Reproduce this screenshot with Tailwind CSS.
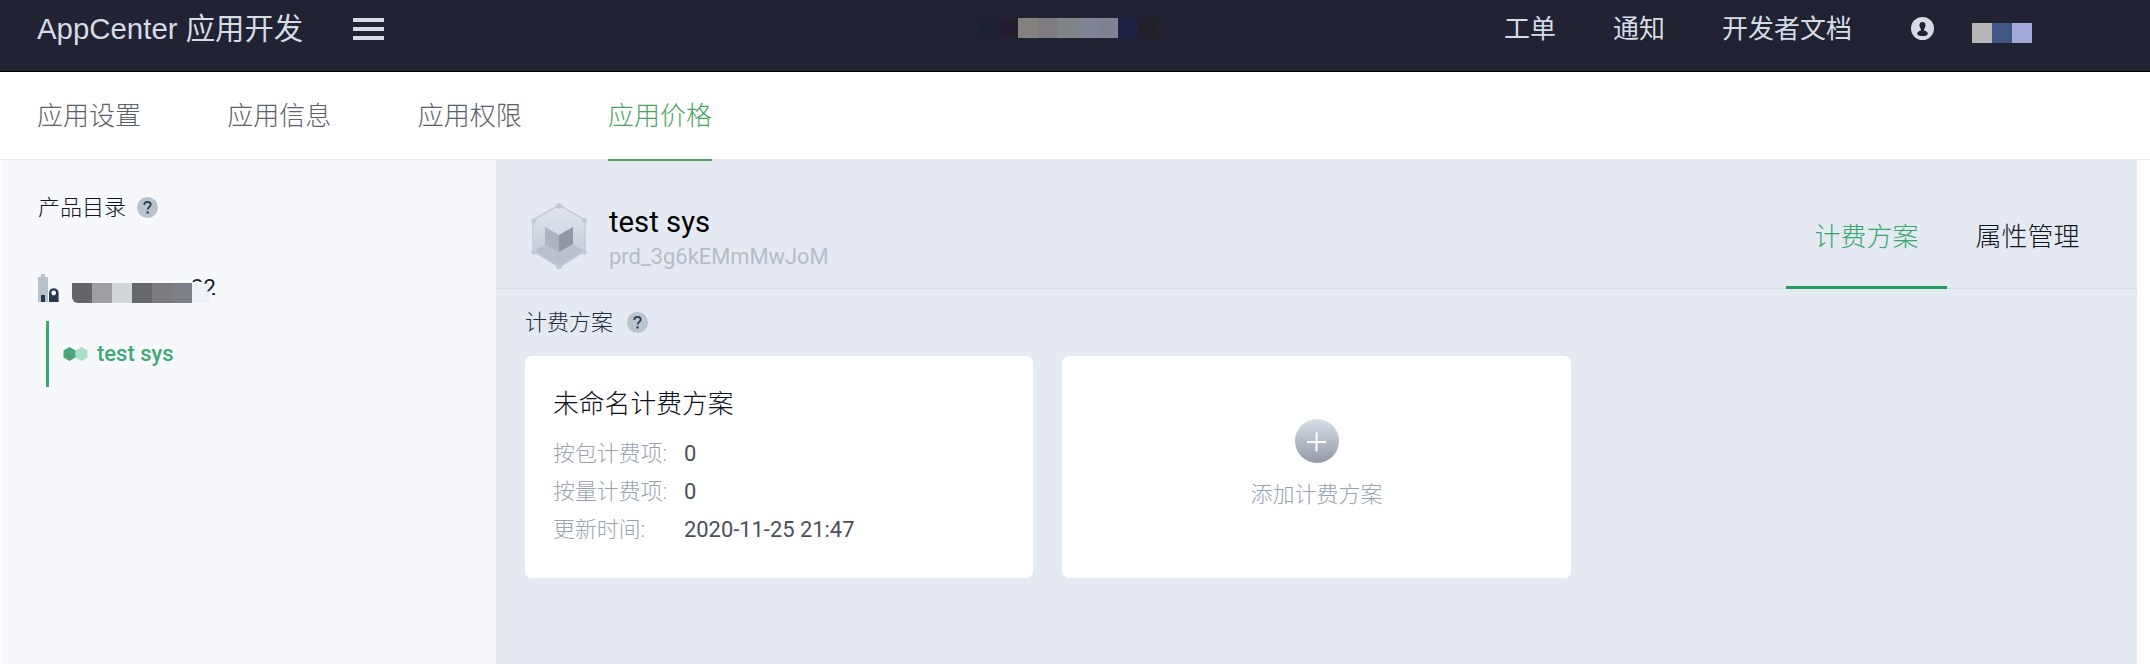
<!DOCTYPE html>
<html lang="zh-CN"><head><meta charset="utf-8"><title>AppCenter</title>
<script src="https://cdn.jsdelivr.net/npm/@tailwindcss/browser@4"></script></head>
<body class="w-[2150px] h-[664px] overflow-hidden bg-white font-['Roboto','Noto_Sans_CJK_SC',sans-serif] flex flex-col whitespace-nowrap">
<header class="h-[72px] shrink-0 bg-[#212332] border-b border-black flex items-start pl-[37px] text-[#d5dce6]">
  <div class="w-[316px] pt-[9px] text-[29.4px] leading-10 font-['Liberation_Sans','Noto_Sans_CJK_SC',sans-serif]">AppCenter 应用开发</div>
  <div class="w-[31px] mt-[18px] flex flex-col gap-[5px]"><i class="h-[4px] bg-current"></i><i class="h-[4px] bg-current"></i><i class="h-[4px] bg-current"></i></div>
  <div class="ml-[594px] mt-[18px] flex h-5"><i class="w-5 bg-[#1c2233] rounded-l-lg"></i><i class="w-5 bg-[#231d2d]"></i><i class="w-5 bg-[#85817f]"></i><i class="w-5 bg-[#817b82]"></i><i class="w-5 bg-[#808487]"></i><i class="w-5 bg-[#7d8594]"></i><i class="w-5 bg-[#7f8190]"></i><i class="w-5 bg-[#1f2243]"></i><i class="w-5 bg-[#242028]"></i></div>
  <nav class="ml-[346px] pt-[9px] flex gap-[57px] text-[26px] leading-10"><a>工单</a><a>通知</a><a>开发者文档</a></nav>
  <svg class="ml-[59px] mt-[17px] w-[23px] h-[23px]" viewBox="0 0 23 23"><circle cx="11.500" cy="11.500" r="11.500" fill="#d5dce6"/><path d="M11.500 5c2.300 0 3 1.500 3 3.300 0 1.700-.7 2.700-1.300 3.700v1.700c2 .4 3.600 1.100 3.600 3 0 1.500-2 2.300-5.300 2.300s-5.300-.8-5.300-2.300c0-1.900 1.600-2.600 3.600-3V12c-.6-1-1.300-2-1.300-3.700C8.500 6.500 9.200 5 11.500 5z" fill="#212332"/></svg>
  <div class="ml-[38px] mt-[23px] flex h-5"><i class="w-5 bg-[#b9b6b9]"></i><i class="w-5 bg-[#405684]"></i><i class="w-5 bg-[#a4a9d9]"></i></div>
</header>
<nav class="h-[88px] shrink-0 border-b border-[#e8eaec] pl-[37px] flex gap-[86.300px] text-[26px] font-light text-[#5b616b] leading-[88px]">
  <a class="h-[89px]">应用设置</a><a class="h-[89px]">应用信息</a><a class="h-[89px]">应用权限</a><a class="h-[89px] border-b-2 border-[#4aa564] text-[#4aa564] relative">应用价格</a>
</nav>
<div class="flex-1 flex pl-[2px] pr-[13px]">
  <aside class="w-[494px] bg-[#f6f8fc] pl-9">
    <div class="mt-[31px] h-8 flex items-center gap-[11px] text-[22px] font-light text-[#111722]">产品目录
      <svg class="w-[21px] h-[21px]" viewBox="0 0 21 21"><circle cx="10.500" cy="10.500" r="10.500" fill="#b8c3ce"/><path d="M7.200 7.900C7.300 6 8.600 4.900 10.500 4.900s3.200 1.100 3.200 2.700c0 2.200-3 2.500-3 5" fill="none" stroke="#2b3a50" stroke-width="1.800"/><rect x="9.500" y="14.300" width="2.200" height="2.200" fill="#2b3a50"/></svg></div>
    <div class="mt-[43px] h-10 flex">
      <svg class="mt-[8px] w-[21px] h-[28px]" viewBox="0 0 21 28"><path d="M0 3h3V0h4v3h3v25H0z" fill="#b7c2cd"/><path d="M3 21h4v7H3zM11 28V19a4.800 4.800 0 0 1 9.600 0v9z" fill="#27384f"/><circle cx="15.700" cy="19" r="2.400" fill="#f6f8fc"/></svg>
      <div class="ml-[13px] mt-[17px] flex h-5"><i class="w-5 bg-[#646569] rounded-bl-md"></i><i class="w-5 bg-[#9e9fa4]"></i><i class="w-5 bg-[#d2d5d9]"></i><i class="w-5 bg-[#64686c]"></i><i class="w-5 bg-[#7a7a7f]"></i><i class="w-5 bg-[#7b7f87]"></i><i class="w-[18px] bg-[#eef1f7]"></i></div>
      <div class="-ml-[19px] mt-[11px] flex text-[22px] leading-[22px] text-[#171d28]"><span class="h-[5px] overflow-hidden">2</span><span class="h-[22px] [clip-path:polygon(0_0,100%_0,100%_100%,75%_100%,70%_65%,0_65%)]">2</span></div>
    </div>
    <div class="mt-[15px] ml-[8px] h-[66px] border-l-[3px] border-[#3fa672] flex items-center pl-[14px]">
      <svg class="w-[25px] h-[14px]" viewBox="0 0 25 14"><path d="M18.500 0l6 3.500v7l-6 3.500-6-3.500v-7z" fill="#a9dfc9"/><path d="M6.500 0l6 3.500v7l-6 3.500-6-3.500v-7z" fill="#4ba57a"/></svg>
      <span class="ml-[9px] pb-[2px] text-[22px] font-medium text-[#43a878]">test sys</span></div>
  </aside>
  <main class="flex-1 bg-[#e5eaf2]">
    <div class="h-[129px] border-b border-[#d5dbe4] flex pl-[35px] pr-[29px]">
      <svg class="mt-[43px] w-[56px] h-[67px]" viewBox="0 0 56 67"><defs><linearGradient id="h" x1="0" y1="0" x2="0" y2="1"><stop stop-color="#e2e7ed"/><stop offset="1" stop-color="#bdc6cf"/></linearGradient></defs><path d="M28 2l26 15v31L28 64 2 48V17z" fill="url(#h)" stroke="#c4ccd5" stroke-width="1.500"/><path d="M28 33l25 15-25 15L3 48z" fill="#b9c1ca"/><path d="M28 16l14 8-14 8-14-8z" fill="#d5dde8"/><path d="M14 24l14 8v17l-14-8z" fill="#adb4bf"/><path d="M42 24l-14 8v17l14-8z" fill="#9197a5"/><g fill="#c1c9d2"><circle cx="28" cy="3" r="2.800"/><circle cx="2.800" cy="17.500" r="2.600"/><circle cx="53.200" cy="17.500" r="2.600"/><circle cx="2.800" cy="49" r="2.600"/><circle cx="53.200" cy="49" r="2.600"/><circle cx="28" cy="63.500" r="3"/></g></svg>
      <div class="ml-[22px] pt-[44px]"><div class="text-[29.3px] leading-9 text-black">test sys</div><div class="mt-[1px] text-[21.9px] leading-8 text-[#b6bdc6]">prd_3g6kEMmMwJoM</div></div>
      <div class="ml-auto flex text-[26px] leading-[154px] font-light"><a class="w-[161px] h-[129px] text-center border-b-[3px] border-[#239c60] text-[#37a76f]">计费方案</a><a class="w-[161px] h-[129px] text-center text-[#111722]">属性管理</a></div>
    </div>
    <section class="pl-[29px]">
      <div class="pt-[18px] h-[67px] flex gap-[14px] text-[22px] leading-8 font-light text-[#1b2a40]">计费方案
        <svg class="mt-[5px] w-[21px] h-[21px]" viewBox="0 0 21 21"><circle cx="10.500" cy="10.500" r="10.500" fill="#b8c3ce"/><path d="M7.200 7.900C7.300 6 8.600 4.900 10.500 4.900s3.200 1.100 3.200 2.700c0 2.200-3 2.500-3 5" fill="none" stroke="#2b3a50" stroke-width="1.800"/><rect x="9.500" y="14.300" width="2.200" height="2.200" fill="#2b3a50"/></svg></div>
      <div class="flex gap-[29px]">
        <article class="w-[508px] h-[222px] rounded-[7px] bg-white pl-[28px] pt-[28px]">
          <h2 class="text-[25.800px] leading-10 font-light text-[#0c111b]">未命名计费方案</h2>
          <dl class="mt-[11px] grid grid-cols-[131px_1fr] text-[21.9px] leading-[38px] text-[#4a5059]"><dt class="font-light text-[#98a3b0]">按包计费项:</dt><dd>0</dd><dt class="font-light text-[#98a3b0]">按量计费项:</dt><dd>0</dd><dt class="font-light text-[#98a3b0]">更新时间:</dt><dd>2020-11-25 21:47</dd></dl>
        </article>
        <article class="w-[509px] h-[222px] rounded-[7px] bg-white flex flex-col items-center pt-[63px]">
          <svg class="w-[44px] h-[44px]" viewBox="0 0 44 44"><defs><linearGradient id="p" x1="0" y1="0" x2="0" y2="1"><stop stop-color="#d7dfe9"/><stop offset="1" stop-color="#9299a6"/></linearGradient></defs><circle cx="22" cy="22" r="22" fill="url(#p)"/><path d="M21.500 13.500v19M12 23h19" stroke="#fff" stroke-width="2"/></svg>
          <div class="mt-[16px] text-[22px] leading-8 font-light text-[#98a3b0]">添加计费方案</div>
        </article>
      </div>
    </section>
  </main>
</div>
</body></html>
